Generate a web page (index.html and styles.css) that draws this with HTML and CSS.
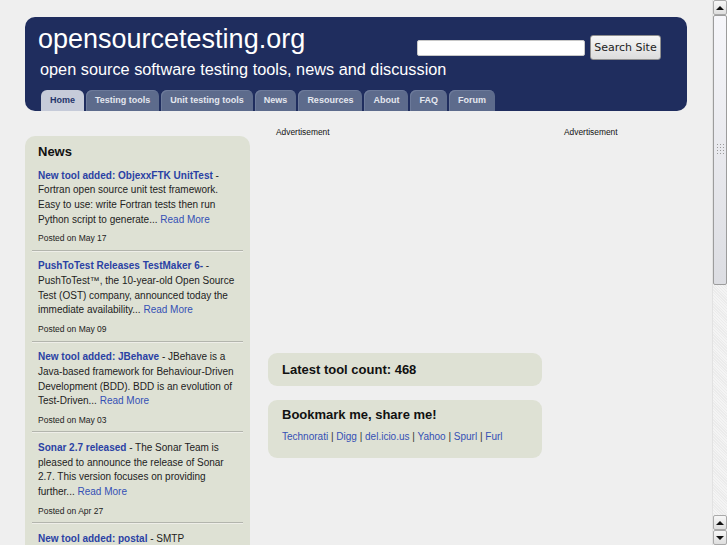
FILE: index.html
```html
<!DOCTYPE html>
<html>
<head>
<meta charset="utf-8">
<title>opensourcetesting.org</title>
<link rel="stylesheet" href="styles.css">
</head>
<body>
<div class="page">
  <header class="masthead">
    <div class="top-row">
      <h1 class="site-title">opensourcetesting.org</h1>
      <form class="search">
        <input class="search-input" type="text">
        <button class="search-btn" type="button">Search Site</button>
      </form>
    </div>
    <p class="tagline">open source software testing tools, news and discussion</p>
    <nav class="tabs">
      <a class="tab active">Home</a>
      <a class="tab">Testing tools</a>
      <a class="tab">Unit testing tools</a>
      <a class="tab">News</a>
      <a class="tab">Resources</a>
      <a class="tab">About</a>
      <a class="tab">FAQ</a>
      <a class="tab">Forum</a>
    </nav>
  </header>

  <div class="content">
    <aside class="sidebar">
      <h2 class="side-heading">News</h2>
      <div class="news-item">
        <p class="news-text"><a class="news-title">New tool added: ObjexxFTK UnitTest</a> - Fortran open source unit test framework. Easy to use: write Fortran tests then run Python script to generate... <a class="more">Read More</a></p>
        <p class="posted">Posted on May 17</p>
      </div>
      <div class="news-item">
        <p class="news-text"><a class="news-title">PushToTest Releases TestMaker 6-</a> - PushToTest™, the 10-year-old Open Source Test (OST) company, announced today the immediate availability... <a class="more">Read More</a></p>
        <p class="posted">Posted on May 09</p>
      </div>
      <div class="news-item">
        <p class="news-text"><a class="news-title">New tool added: JBehave</a> - JBehave is a Java-based framework for Behaviour-Driven Development (BDD). BDD is an evolution of Test-Driven... <a class="more">Read More</a></p>
        <p class="posted">Posted on May 03</p>
      </div>
      <div class="news-item">
        <p class="news-text"><a class="news-title">Sonar 2.7 released</a> - The Sonar Team is pleased to announce the release of Sonar 2.7. This version focuses on providing further... <a class="more">Read More</a></p>
        <p class="posted">Posted on Apr 27</p>
      </div>
      <div class="news-item">
        <p class="news-text"><a class="news-title">New tool added: postal</a> - SMTP benchmarking tool, tests mail servers for performance... <a class="more">Read More</a></p>
        <p class="posted">Posted on Apr 20</p>
      </div>
    </aside>

    <main class="middle">
      <div class="ad-label">Advertisement</div>
      <div class="ad-slot"></div>
      <section class="box count-box">
        <h3 class="box-heading">Latest tool count: 468</h3>
      </section>
      <section class="box share-box">
        <h3 class="box-heading">Bookmark me, share me!</h3>
        <p class="share-links"><a>Technorati</a> | <a>Digg</a> | <a>del.icio.us</a> | <a>Yahoo</a> | <a>Spurl</a> | <a>Furl</a></p>
      </section>
    </main>

    <div class="right">
      <div class="ad-label">Advertisement</div>
    </div>
  </div>
</div>

<div class="scrollbar">
  <div class="sb-btn"><span class="arrow up"></span></div>
  <div class="sb-thumb"><span class="grip"></span></div>
  <div class="sb-track"></div>
  <div class="sb-btn"><span class="arrow up"></span></div>
  <div class="sb-btn"><span class="arrow down"></span></div>
</div>
</body>
</html>
```

FILE: styles.css
```css
html, body {
  margin: 0;
  padding: 0;
}
body {
  background: #efefef;
  font-family: "Liberation Sans", Arial, sans-serif;
  color: #222;
  width: 727px;
  height: 545px;
  overflow: hidden;
}
a { text-decoration: none; cursor: pointer; }

.page {
  width: 712px;
  box-sizing: border-box;
  padding: 17px 25px 0 25px;
}

/* Header */
.masthead {
  background: #1f2d5e;
  border-radius: 10px;
  height: 94px;
  box-sizing: border-box;
  display: flex;
  flex-direction: column;
  padding-top: 7px;
}
.top-row {
  display: flex;
  justify-content: space-between;
  align-items: flex-start;
  padding: 0 26px 0 13px;
}
.site-title {
  margin: 0;
  font-size: 27px;
  line-height: 30px;
  font-weight: normal;
  color: #ffffff;
}
.search {
  display: flex;
  align-items: center;
  gap: 5px;
  margin: 11px 0 -9px 0;
  height: 25px;
}
.search-input {
  width: 168px;
  height: 16px;
  box-sizing: border-box;
  border: 1px solid #c8c8c8;
  border-radius: 2px;
  background: #fff;
  padding: 0;
  margin: 0;
}
.search-btn {
  width: 71px;
  height: 25px;
  box-sizing: border-box;
  border: 1px solid #8f8f8f;
  border-radius: 3px;
  background: linear-gradient(#f6f6f6, #dcdcdc);
  font-family: "DejaVu Sans", "Liberation Sans", sans-serif;
  font-size: 11px;
  color: #222;
  padding: 0;
  margin: 0;
}
.tagline {
  margin: 5px 0 0 15px;
  font-size: 16.3px;
  line-height: 20px;
  color: #ffffff;
}
.tabs {
  margin-top: auto;
  display: flex;
  gap: 2px;
  padding-left: 16px;
}
.tab {
  height: 21px;
  line-height: 21px;
  padding: 0 9px;
  background: #5d6b8c;
  color: #e4e7ef;
  font-size: 9px;
  font-weight: bold;
  border-radius: 6px 6px 0 0;
  box-shadow: inset 1px 1px 0 #6c7a9a;
}
.tab.active {
  background: #c6cbd9;
  color: #24346a;
  box-shadow: none;
}

/* Content */
.content {
  display: flex;
  align-items: flex-start;
  margin-top: 16px;
}
.sidebar {
  width: 225px;
  flex: none;
  margin-top: 9px;
  background: #dee1d4;
  border-radius: 10px 10px 0 0;
  padding-top: 8px;
  box-sizing: border-box;
}
.side-heading {
  margin: 0 0 0 13px;
  font-size: 13px;
  line-height: 16px;
  font-weight: bold;
  color: #111;
}
.news-item {
  margin: 0 7px;
  padding: 8.5px 5px 4.5px 6px;
  border-bottom: 1px solid #b3b5ad;
  box-shadow: 0 1px 0 #eeeee8;
}
.news-text {
  margin: 0;
  font-size: 10px;
  line-height: 14.7px;
  color: #222;
}
.news-title {
  color: #2a41a4;
  font-weight: bold;
}
.more {
  color: #3450b4;
}
.posted {
  margin: 5px 0 0;
  font-size: 8.5px;
  line-height: 13px;
  color: #222;
}

.middle {
  width: 274px;
  flex: none;
  margin-left: 18px;
}
.ad-label {
  font-size: 8.4px;
  line-height: 10px;
  padding-left: 8px;
  color: #111;
}
.ad-slot {
  height: 216px;
}
.box {
  background: #dee1d4;
  border-radius: 9px;
  padding: 0 14px;
  box-sizing: border-box;
}
.count-box {
  height: 33px;
  display: flex;
  align-items: center;
}
.share-box {
  margin-top: 14px;
  height: 58px;
  padding-top: 7px;
}
.box-heading {
  margin: 0;
  font-size: 13px;
  line-height: 16px;
  font-weight: bold;
  color: #111;
}
.share-links {
  margin: 7px 0 0;
  font-size: 10px;
  line-height: 14px;
  color: #333;
}
.share-links a {
  color: #3450b4;
}

.right {
  margin-left: 14px;
  flex: 1;
}

/* Fake scrollbar */
.scrollbar {
  position: fixed;
  top: 0;
  right: 0;
  width: 15px;
  height: 545px;
  display: flex;
  flex-direction: column;
  background: #f3f3f3;
  border-left: 1px solid #e2e2e2;
  box-sizing: border-box;
}
.sb-btn {
  height: 15px;
  flex: none;
  box-sizing: border-box;
  border: 1px solid #a9a9a9;
  border-radius: 2px;
  background: linear-gradient(#f7f7f7, #dedede);
  display: flex;
  align-items: center;
  justify-content: center;
}
.arrow {
  width: 0;
  height: 0;
  border-left: 4px solid transparent;
  border-right: 4px solid transparent;
}
.arrow.up { border-bottom: 4px solid #111; }
.arrow.down { border-top: 4px solid #111; }
.sb-thumb {
  height: 270px;
  flex: none;
  box-sizing: border-box;
  border: 1px solid #9c9c9c;
  border-radius: 2px;
  background: linear-gradient(to bottom, #f6f6fa, #dcdde2);
  display: flex;
  align-items: center;
  justify-content: center;
}
.grip {
  width: 9px;
  height: 12px;
  background-image: radial-gradient(circle, #9a9a9a 0.7px, transparent 0.8px);
  background-size: 3px 3px;
  margin-top: -2px;
}
.sb-track {
  flex: 1;
  background: repeating-linear-gradient(45deg, #f4f4f4 0 1px, #ebebeb 1px 2px);
}
```
